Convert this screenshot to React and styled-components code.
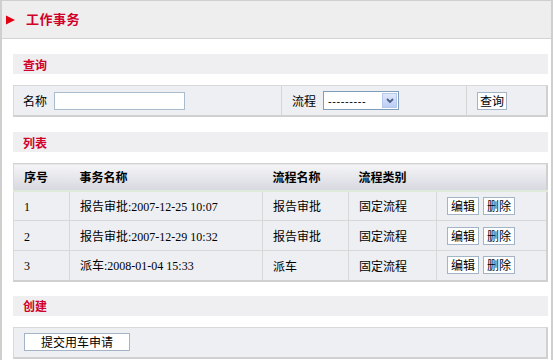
import React from "react";
import styled, { createGlobalStyle } from "styled-components";

const Global = createGlobalStyle`
  html, body { margin: 0; padding: 0; background: #fff; }
  body { font-family: "Noto Sans CJK SC", "Liberation Sans", sans-serif; font-size: 12px; color: #000; }
  * { box-sizing: border-box; }
`;

const Page = styled.div`
  width: 553px;
  height: 360px;
  overflow: hidden;
  border-left: 2px solid #cfcfcf;
  border-right: 2px solid #cfcfcf;
  border-top: 1px solid #cfcfcf;
  background: #fff;
`;

const Header = styled.div`
  height: 38px;
  background: #eeeeee;
  border-bottom: 1px solid #d3d3d3;
  display: flex;
  align-items: center;
  padding-left: 2px;
  gap: 11px;
`;

const Title = styled.h1`
  margin: 0;
  font-size: 13px;
  font-weight: bold;
  color: #d0002a;
  letter-spacing: 0.5px;
  line-height: 1;
  margin-top: -2px;
`;

const Content = styled.div`
  padding: 15px 3px 0 11px;
  display: flex;
  flex-direction: column;
`;

const Bar = styled.div`
  height: 20px;
  background: #efeff2;
  display: flex;
  align-items: center;
  padding-left: 10px;
  font-weight: bold;
  font-size: 12px;
  color: #d0002a;
  margin-bottom: 11px;
`;

const Panel = styled.div`
  background: #eeeff3;
  border: 1px solid #d9d9d9;
  border-right: 2px solid #d0d0d0;
  border-bottom: 2px solid #d0d0d0;
  margin-bottom: ${(p) => p.$mb || 0}px;
`;

const SearchGrid = styled.div`
  display: grid;
  grid-template-columns: 267px 185px 1fr;
  height: 29px;
`;

const Cell = styled.div`
  display: flex;
  align-items: center;
  padding-left: ${(p) => p.$pl}px;
  gap: 7px;
  border-left: ${(p) => (p.$div ? "1px solid #d6d6d6" : "none")};
`;

const TextInput = styled.input`
  width: 131px;
  height: 18px;
  border: 1px solid #a9bccd;
  background: #fff;
  padding: 0 3px;
  font-size: 12px;
  outline: none;
`;

const SelectWrap = styled.div`
  position: relative;
  width: 76px;
  height: 19px;
  border: 1px solid #7f9db9;
  background: #fff;
  display: flex;
  align-items: center;
  padding-left: 4px;
  font-family: "Liberation Sans", sans-serif;
  font-size: 11px;
  letter-spacing: 0.6px;
`;

const Arrow = styled.div`
  position: absolute;
  right: 1px;
  top: 1px;
  bottom: 1px;
  width: 15px;
  background: linear-gradient(#dfe8fb, #bccdf4);
  border: 1px solid #b4c7ee;
  display: flex;
  align-items: center;
  justify-content: center;
`;

const Btn = styled.button`
  height: 18px;
  padding: 0 ${(p) => p.$px || 3}px;
  width: ${(p) => (p.$w ? p.$w + "px" : "auto")};
  border: 1px solid #a3b4c6;
  background: #fff;
  font-family: "Noto Sans CJK SC", sans-serif;
  font-size: 12px;
  line-height: 16px;
  color: #000;
  cursor: pointer;
`;

const Table = styled.table`
  width: 535px;
  border-collapse: collapse;
  background: #eeeff3;
  border-bottom: 2px solid #d0d0d0;
  border-right: 2px solid #d0d0d0;
  border-left: 1px solid #d9d9d9;
  border-top: 1px solid #d3d3d3;
  margin-bottom: 14px;
  table-layout: fixed;
`;

const Th = styled.th`
  height: 27px;
  text-align: left;
  font-weight: bold;
  font-size: 12px;
  padding-left: 10px;
  background: linear-gradient(#f5f5f7, #d7d8e0);
  border-bottom: 2px solid #dfeadb;
`;

const Td = styled.td`
  height: 30px;
  padding-left: 10px;
  font-size: 12px;
  border-bottom: 1px solid #d8d8d8;
  border-left: ${(p) => (p.$first ? "none" : "1px solid #d8d8d8")};
  ${(p) => (p.$last ? "border-bottom: none;" : "")}
`;

const Latin = styled.span`
  font-family: "Liberation Serif", serif;
  font-size: 12px;
`;

const Actions = styled.div`
  display: flex;
  gap: 4px;
`;

const rows = [
  { id: "1", name: "报告审批", date: ":2007-12-25 10:07", flow: "报告审批", type: "固定流程" },
  { id: "2", name: "报告审批", date: ":2007-12-29 10:32", flow: "报告审批", type: "固定流程" },
  { id: "3", name: "派车", date: ":2008-01-04 15:33", flow: "派车", type: "固定流程" },
];

export default function App() {
  return (
    <Page>
      <Global />
      <Header>
        <svg width="11" height="10" viewBox="0 0 11 10">
          <polygon points="2,0.5 11,5 2,9.5" fill="#e00010" />
        </svg>
        <Title>工作事务</Title>
      </Header>
      <Content>
        <Bar>查询</Bar>
        <Panel $mb={15}>
          <SearchGrid>
            <Cell $pl={9}>
              名称
              <TextInput />
            </Cell>
            <Cell $pl={10} $div>
              流程
              <SelectWrap>
                ---------
                <Arrow>
                  <svg width="8" height="6" viewBox="0 0 8 6">
                    <polyline points="1,1 4,4 7,1" fill="none" stroke="#4a5f8a" strokeWidth="1.8" />
                  </svg>
                </Arrow>
              </SelectWrap>
            </Cell>
            <Cell $pl={10} $div>
              <Btn $px={2}>查询</Btn>
            </Cell>
          </SearchGrid>
        </Panel>
        <Bar>列表</Bar>
        <Table>
          <colgroup>
            <col style={{ width: 56 }} />
            <col style={{ width: 193 }} />
            <col style={{ width: 86 }} />
            <col style={{ width: 88 }} />
            <col />
          </colgroup>
          <thead>
            <tr>
              <Th>序号</Th>
              <Th>事务名称</Th>
              <Th>流程名称</Th>
              <Th>流程类别</Th>
              <Th></Th>
            </tr>
          </thead>
          <tbody>
            {rows.map((r, i) => {
              const last = i === rows.length - 1;
              return (
                <tr key={r.id}>
                  <Td $first $last={last}><Latin>{r.id}</Latin></Td>
                  <Td $last={last}>
                    {r.name}
                    <Latin>{r.date}</Latin>
                  </Td>
                  <Td $last={last}>{r.flow}</Td>
                  <Td $last={last}>{r.type}</Td>
                  <Td $last={last}>
                    <Actions>
                      <Btn>编辑</Btn>
                      <Btn>删除</Btn>
                    </Actions>
                  </Td>
                </tr>
              );
            })}
          </tbody>
        </Table>
        <Bar>创建</Bar>
        <Panel>
          <SearchGrid>
            <Cell $pl={10}>
              <Btn $w={106}>提交用车申请</Btn>
            </Cell>
          </SearchGrid>
        </Panel>
      </Content>
    </Page>
  );
}
